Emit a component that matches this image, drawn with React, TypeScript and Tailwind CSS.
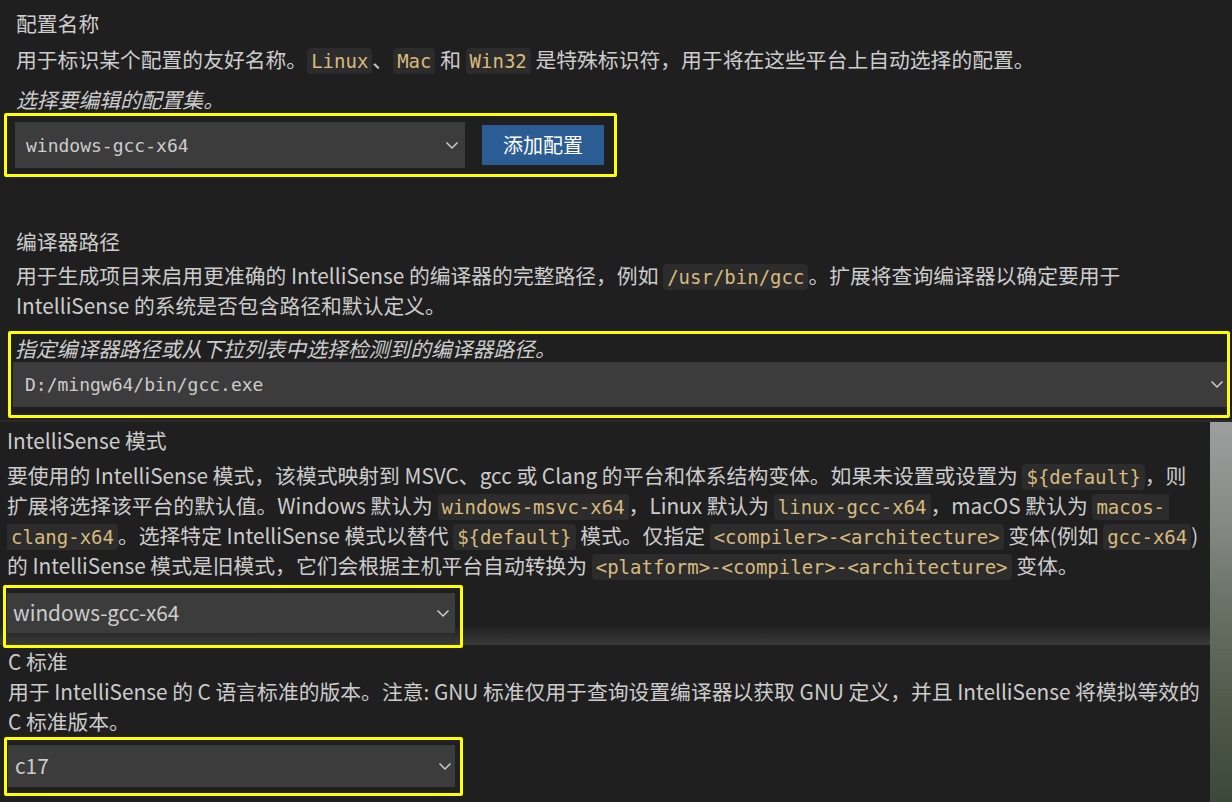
import React from "react"

const sans = "font-['Noto_Sans_CJK_SC','Noto_Sans',sans-serif]"
const mono = "font-['DejaVu_Sans_Mono','Noto_Sans_CJK_SC',monospace]"

function Code({ children, cut }: { children: React.ReactNode; cut?: "left" | "right" }) {
  const round = cut === "right" ? "rounded-l-[4px]" : cut === "left" ? "rounded-r-[4px]" : "rounded-[4px]"
  return (
    <span
      className={`${mono} ${round} inline-block bg-[#2c2c2c] px-[4px] text-[19px] leading-[26px] text-[#d7ba7d]`}
    >
      {children}
    </span>
  )
}

function Chevron() {
  return (
    <svg width="14" height="9" viewBox="0 0 14 9" className="shrink-0">
      <path d="M1.5 1.5l5.5 5.5 5.5-5.5" stroke="#cccccc" strokeWidth="1.5" fill="none" />
    </svg>
  )
}

function Line({ children, className = "" }: { children: React.ReactNode; className?: string }) {
  return <div className={`h-[30px] whitespace-nowrap leading-[30px] ${className}`}>{children}</div>
}

export default function App() {
  return (
    <div className={`${sans} flex h-[802px] w-[1232px] flex-col overflow-hidden bg-[#1f1f1f] text-[20.8px] text-[#cccccc]`}>
      {/* 配置名称 / 编译器路径 */}
      <div className="h-[420px] shrink-0 px-[16px] pt-[8px]">
        <Line>配置名称</Line>
        <Line className="mt-[6px]">
          用于标识某个配置的友好名称。<Code>Linux</Code>、<Code>Mac</Code> 和 <Code>Win32</Code> 是特殊标识符，用于将在这些平台上自动选择的配置。
        </Line>
        <Line className="mt-[10px] italic">选择要编辑的配置集。</Line>

        <div className="-ml-[12px] -mt-[1px] flex h-[64px] w-[613px] items-center rounded-[2px] border-[3px] border-[#ffff00] pl-[8px] pr-[10px]">
          <div className="flex h-[46px] w-[450px] items-center justify-between bg-[#3c3c3c] pl-[11px] pr-[6px]">
            <span className={`${mono} text-[18px]`}>windows-gcc-x64</span>
            <Chevron />
          </div>
          <button className="ml-[17px] h-[40px] w-[122px] bg-[#2b5d94] text-[20px] text-white">添加配置</button>
        </div>

        <Line className="mt-[49px]">编译器路径</Line>
        <Line className="mt-[4px]">
          用于生成项目来启用更准确的 IntelliSense 的编译器的完整路径，例如 <Code>/usr/bin/gcc</Code>。扩展将查询编译器以确定要用于
        </Line>
        <Line>IntelliSense 的系统是否包含路径和默认定义。</Line>

        <div className="-ml-[8px] mt-[11px] flex h-[87px] w-[1222px] flex-col rounded-[2px] border-[3px] border-[#ffff00] pl-[2px]">
          <div className="h-[28px] whitespace-nowrap pl-[2px] leading-[28px] italic">
            指定编译器路径或从下拉列表中选择检测到的编译器路径。
          </div>
          <div className="flex h-[45px] items-center justify-between bg-[#3c3c3c] pl-[12px] pr-[3px]">
            <span className={`${mono} text-[18px]`}>D:/mingw64/bin/gcc.exe</span>
            <Chevron />
          </div>
        </div>
      </div>
      <div className="h-[2px] shrink-0 bg-[#2a2a2a]" />

      <div className="flex flex-1">
        <div className="flex w-[1210px] flex-col">
          {/* IntelliSense 模式 */}
          <div className="h-[223px] shrink-0 bg-[linear-gradient(180deg,#1f1f1f_0%,#1f1f1f_91%,#3a3a3a_100%)] px-[7px] pt-[3px]">
            <Line>IntelliSense 模式</Line>
            <div className="mt-[5px]">
              <Line>
                要使用的 IntelliSense 模式，该模式映射到 MSVC、gcc 或 Clang 的平台和体系结构变体。如果未设置或设置为 <Code>{"${default}"}</Code>，则
              </Line>
              <Line>
                扩展将选择该平台的默认值。Windows 默认为 <Code>windows-msvc-x64</Code>，Linux 默认为 <Code>linux-gcc-x64</Code>，macOS 默认为 <Code cut="right">macos-</Code>
              </Line>
              <Line>
                <Code cut="left">clang-x64</Code>。选择特定 IntelliSense 模式以替代 <Code>{"${default}"}</Code> 模式。仅指定 <Code>{"<compiler>-<architecture>"}</Code> 变体(例如 <Code>gcc-x64</Code>)
              </Line>
              <Line>
                的 IntelliSense 模式是旧模式，它们会根据主机平台自动转换为 <Code>{"<platform>-<compiler>-<architecture>"}</Code> 变体。
              </Line>
            </div>
            <div className="relative z-10 -ml-[4px] mt-[5px] h-[63px] w-[460px] rounded-[2px] border-[3px] border-[#ffff00] pl-[1px] pr-[5px] pt-[5px]">
              <div className="flex h-[40px] items-center justify-between bg-[#3c3c3c] pl-[6px] pr-[5px]">
                <span>windows-gcc-x64</span>
                <Chevron />
              </div>
            </div>
          </div>

          {/* C 标准 */}
          <div className="flex-1 px-[8px] pt-[1px]">
            <Line>C 标准</Line>
            <Line>
              用于 IntelliSense 的 C 语言标准的版本。注意: GNU 标准仅用于查询设置编译器以获取 GNU 定义，并且 IntelliSense 将模拟等效的
            </Line>
            <Line>C 标准版本。</Line>
            <div className="-ml-[4px] mt-[1px] h-[59px] w-[459px] rounded-[2px] border-[3px] border-[#ffff00] pl-[1px] pr-[5px] pt-[5px]">
              <div className="flex h-[42px] items-center justify-between bg-[#3c3c3c] pl-[7px] pr-[3px]">
                <span>c17</span>
                <Chevron />
              </div>
            </div>
          </div>
        </div>
        <div className="flex-1 bg-[linear-gradient(180deg,#9c9f9e_0%,#868b87_25%,#687064_50%,#4f5a4b_75%,#3c4839_100%)]" />
      </div>
    </div>
  )
}
